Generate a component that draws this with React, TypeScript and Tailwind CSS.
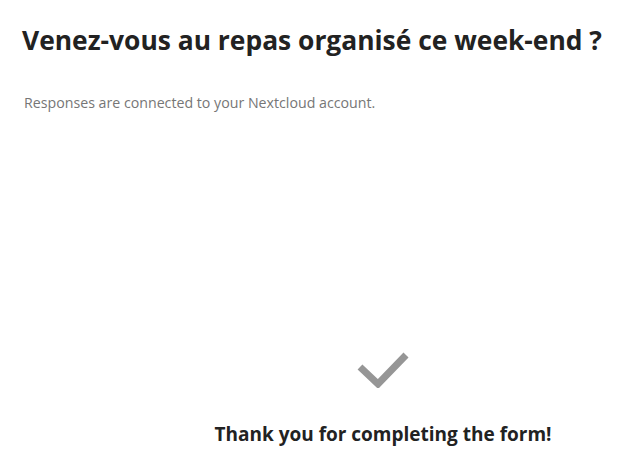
const App = () => {
    return (
        <div className="min-h-[468px] bg-white font-['Open_Sans',sans-serif] text-[#222222]">
            <div className="px-[22px] pt-[22px]">
                <h2 className="whitespace-nowrap text-[26.4px] font-bold leading-[36px]">
                    Venez-vous au repas organisé ce week-end ?
                </h2>
                <p className="ml-[2px] mt-[36px] text-[14.2px] leading-[18px] text-[#767676]">
                    Responses are connected to your Nextcloud account.
                </p>
            </div>

            <div className="mt-[238px] flex flex-col items-center pl-[132px]">
                <svg width="52" height="38" viewBox="0 0 52 38" className="block">
                    <path d="M3 17 L21 34 L49 5" fill="none" stroke="#969696" strokeWidth="7" strokeLinecap="butt" strokeLinejoin="miter" />
                </svg>
                <h3 className="mt-[34px] whitespace-nowrap text-[19px] font-bold leading-[24px] text-[#222222]">
                    Thank you for completing the form!
                </h3>
            </div>
        </div>
    );
};

export default App;
